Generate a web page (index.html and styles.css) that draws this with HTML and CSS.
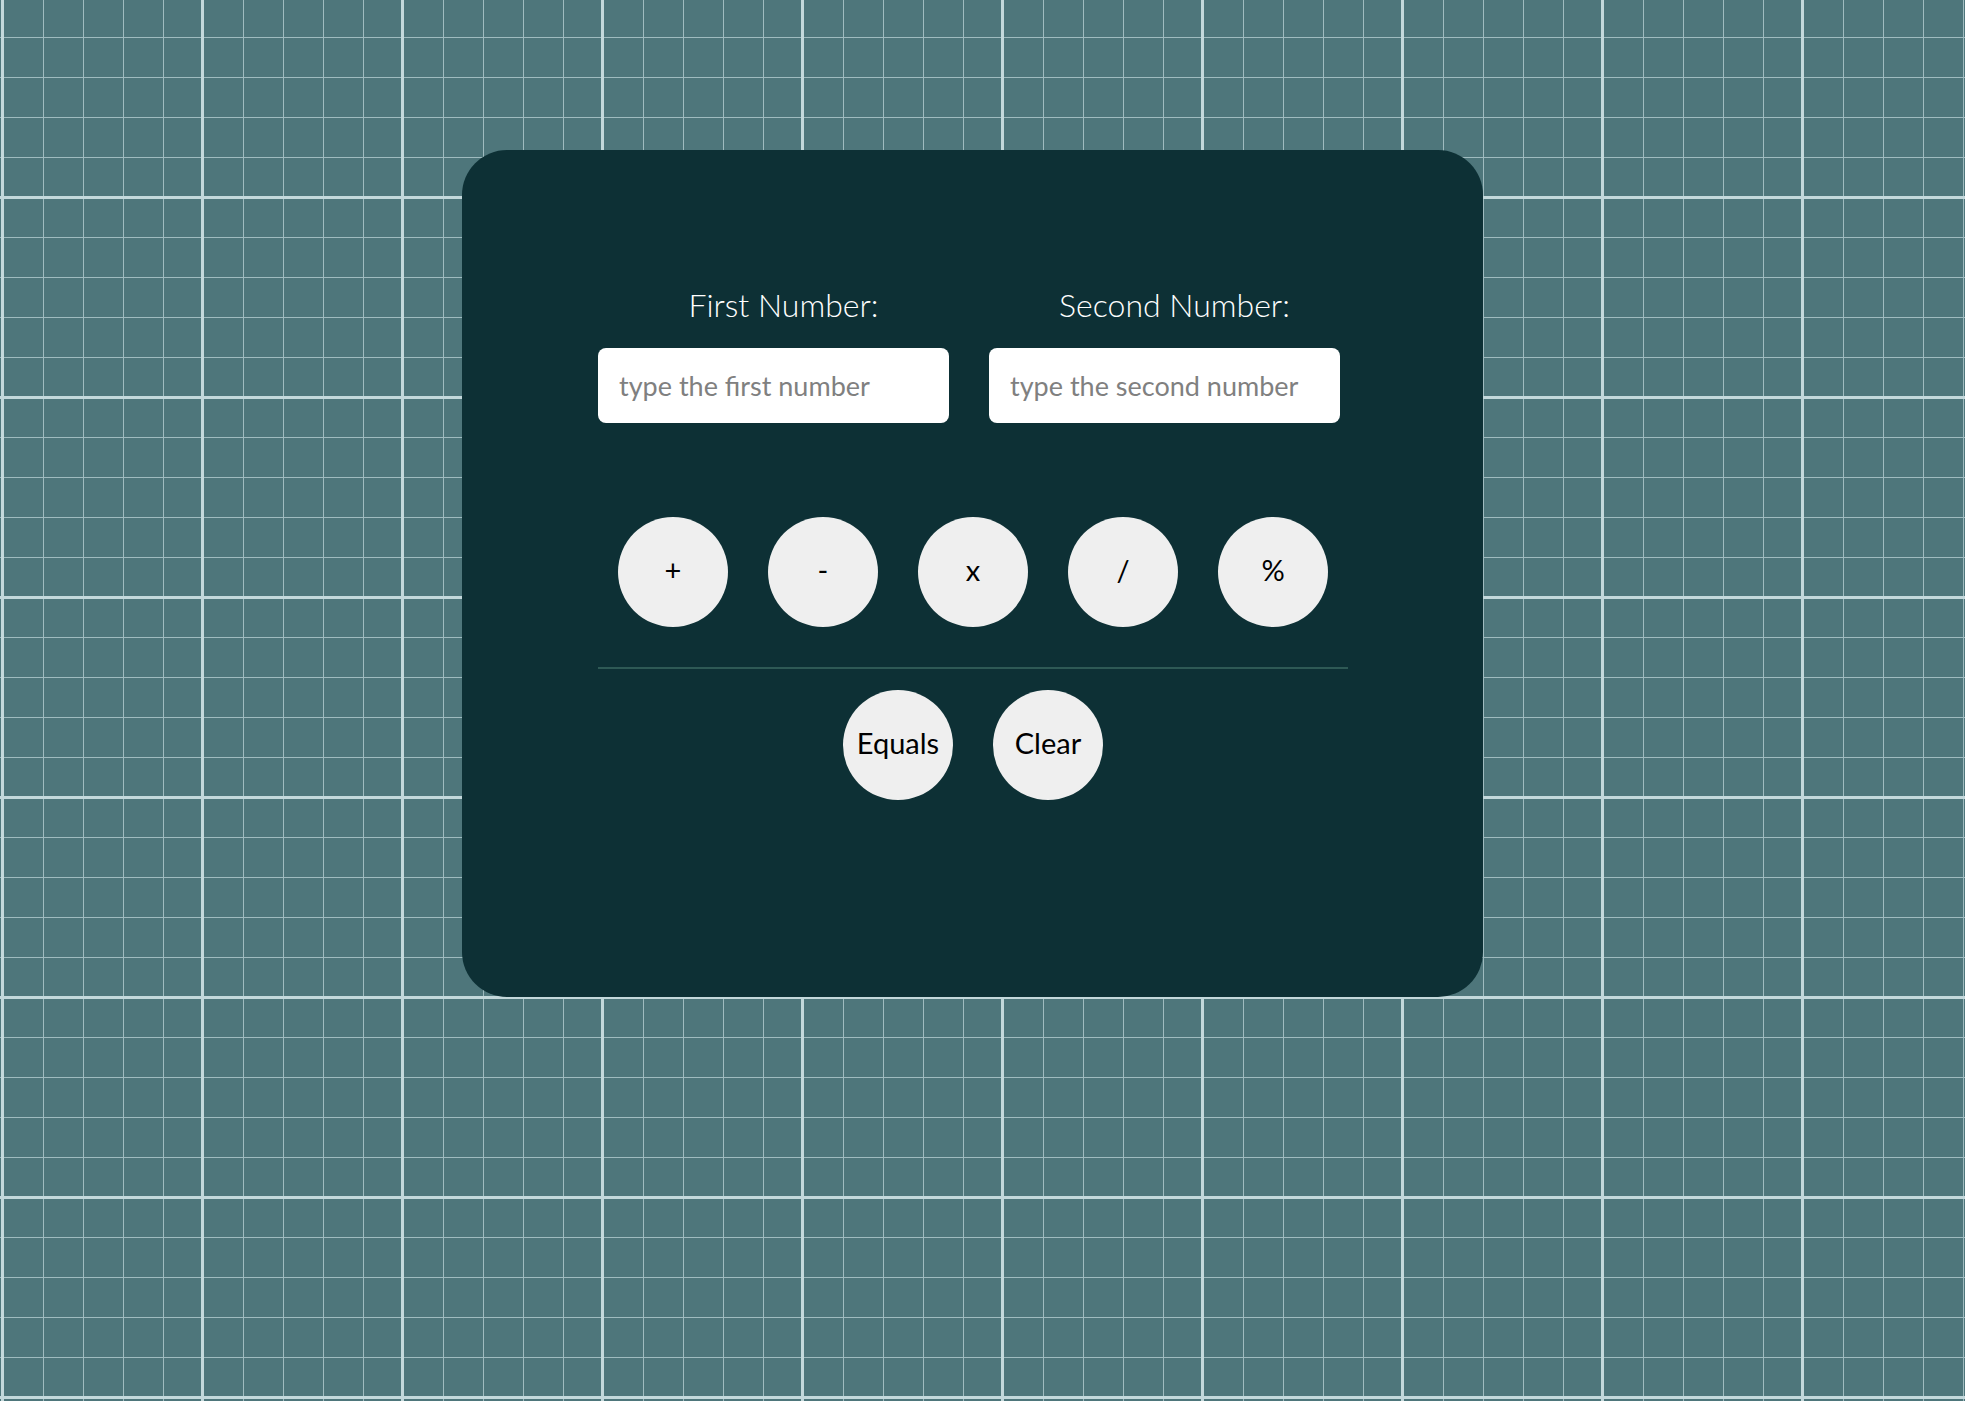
FILE: index.html
```html
<!DOCTYPE html>
<html lang="en">
<head>
<meta charset="utf-8">
<title>Calculator</title>
<link rel="stylesheet" href="styles.css">
</head>
<body>
  <main class="card">
    <div class="inputs">
      <div class="field">
        <label class="field-label" for="first">First Number:</label>
        <input class="field-input" id="first" type="text" placeholder="type the first number">
      </div>
      <div class="field">
        <label class="field-label" for="second">Second Number:</label>
        <input class="field-input" id="second" type="text" placeholder="type the second number">
      </div>
    </div>
    <div class="operators">
      <button class="round-btn">+</button>
      <button class="round-btn">-</button>
      <button class="round-btn">x</button>
      <button class="round-btn">/</button>
      <button class="round-btn">%</button>
    </div>
    <hr class="divider">
    <div class="actions">
      <button class="round-btn">Equals</button>
      <button class="round-btn">Clear</button>
    </div>
  </main>
</body>
</html>
```
FILE: styles.css
```css
html, body {
  margin: 0;
  padding: 0;
}

body {
  min-height: 100vh;
  font-family: "Lato", "Noto Sans", sans-serif;
  background-color: #4e767b;
  background-image:
    linear-gradient(to right, #c3d8db 3px, transparent 3px),
    linear-gradient(to bottom, #c3d8db 3px, transparent 3px),
    linear-gradient(to right, #9fbbbf 1.5px, transparent 1.5px),
    linear-gradient(to bottom, #9fbbbf 1.5px, transparent 1.5px);
  background-size: 200px 200px, 200px 200px, 40px 40px, 40px 40px;
  background-position: 1px 0, 0 196px, 3px 0, 0 37px;
  overflow: hidden;
}

.card {
  box-sizing: border-box;
  width: 1021px;
  margin: 150px 0 0 462px;
  padding: 136px 135px 197px 136px;
  background: #0d3035;
  border-radius: 45px;
}

.inputs {
  display: flex;
  gap: 40px;
}

.field {
  display: flex;
  flex-direction: column;
  width: 351px;
}

.field-label {
  display: block;
  padding-left: 20px;
  text-align: center;
  font-size: 32px;
  font-weight: 300;
  line-height: 38px;
  color: #ffffff;
  margin-bottom: 24px;
}

.field-input {
  box-sizing: border-box;
  width: 351px;
  height: 75px;
  border: none;
  border-radius: 8px;
  padding: 0 0 0 21px;
  background: #ffffff;
  font-family: "Lato", "Noto Sans", sans-serif;
  font-size: 27px;
  color: #222;
  outline: none;
}

.field-input::placeholder {
  color: #808080;
}

.operators {
  display: flex;
  justify-content: center;
  gap: 40px;
  margin-top: 94px;
}

.round-btn {
  width: 110px;
  height: 110px;
  padding: 0 0 5px;
  border: none;
  border-radius: 50%;
  background: #efefef;
  color: #000;
  font-family: "Lato", "Noto Sans", sans-serif;
  font-size: 29px;
  cursor: pointer;
}

.divider {
  margin: 40px 0 0;
  height: 2px;
  border: none;
  background: #2e5955;
}

.actions {
  display: flex;
  justify-content: center;
  gap: 40px;
  margin-top: 21px;
}
```
